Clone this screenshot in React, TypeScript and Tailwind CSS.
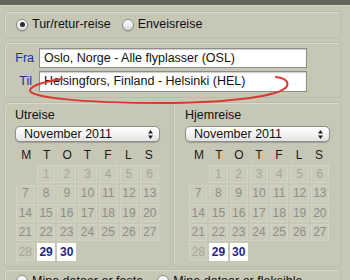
import React from "react";

const days: (number | null)[] = [
  null, 1, 2, 3, 4, 5, 6,
  7, 8, 9, 10, 11, 12, 13,
  14, 15, 16, 17, 18, 19, 20,
  21, 22, 23, 24, 25, 26, 27,
  28, 29, 30,
];

const Radio = ({ checked }: { checked: boolean }) => (
  <span className="flex h-[12px] w-[12px] items-center justify-center rounded-full border border-[#8d8d88] bg-gradient-to-b from-[#ffffff] to-[#dcdcdc] shadow-[0_1px_1px_rgba(0,0,0,0.15)]">
    {checked && <span className="h-[5px] w-[5px] rounded-full bg-[#2a2a2a]" />}
  </span>
);

const Select = ({ value }: { value: string }) => (
  <div className="flex h-[16px] items-center justify-between rounded-[5px] border border-[#8f8f8a] bg-gradient-to-b from-[#ffffff] via-[#f4f4f4] to-[#e2e2e2] pl-[8px] pr-[5px] text-[12.5px] text-[#111] shadow-[0_1px_1px_rgba(0,0,0,0.2)]">
    <span className="leading-none">{value}</span>
    <svg width="7" height="11" viewBox="0 0 7 11">
      <path d="M3.5 1 L6 4.5 L1 4.5 Z" fill="#222" />
      <path d="M3.5 10 L6 6.5 L1 6.5 Z" fill="#222" />
    </svg>
  </div>
);

const Calendar = ({ title, pad, grid }: { title: string; pad: string; grid: string }) => (
  <div className="flex h-[165px] flex-col rounded-[4px] border border-[#bcbcad] pt-[5px] shadow-[inset_1px_1px_0_#d9d9cc]">
    <div className={pad}>
      <div className="text-[12.5px] leading-[14px] text-[#111]">{title}</div>
      <div className="mt-[4px]">
        <Select value="November 2011" />
      </div>
    </div>
    <div className={grid}>
      <div className="mt-[6px] grid grid-cols-7 text-center text-[12px] leading-[14px] text-[#1a1a1a]">
        {["M", "T", "O", "T", "F", "L", "S"].map((d, i) => (
          <span key={i}>{d}</span>
        ))}
      </div>
      <div className="mt-[3px] grid grid-cols-7 gap-x-[2px] gap-y-[2px]">
        {days.map((d, i) =>
          d === null ? (
            <span key={i} />
          ) : d >= 29 ? (
            <span
              key={i}
              className="flex h-[17.5px] items-center justify-center bg-white text-[12px] font-semibold text-[#262680]"
            >
              {d}
            </span>
          ) : (
            <span
              key={i}
              className={`flex h-[17.5px] items-center justify-center border border-[#d3d3c5] bg-[#cbcbbc] text-[12px] ${
                d <= 6 || d === 28 ? "text-[#a6a69a]" : "text-[#8e8e86]"
              }`}
            >
              {d}
            </span>
          )
        )}
      </div>
    </div>
  </div>
);

export default function App() {
  return (
    <div className="relative h-[280px] w-[350px] overflow-hidden bg-[#c7c7b6] font-['Liberation_Sans',Arial,sans-serif]">
      <div className="h-[5px] bg-[#66665a]" />
      <div className="h-[1px] bg-[#d4d4c5]" />

      <div className="ml-[4px] w-[338px]">
        {/* trip type */}
        <div className="mt-[5px] flex h-[27px] items-center rounded-[4px] border border-[#bcbcad] pl-[11px] shadow-[inset_1px_1px_0_#d9d9cc]">
          <Radio checked />
          <span className="ml-[4px] text-[12.5px] text-[#111]">Tur/retur-reise</span>
          <span className="ml-[11px]">
            <Radio checked={false} />
          </span>
          <span className="ml-[4px] text-[12.5px] text-[#111]">Enveisreise</span>
        </div>

        {/* from / to */}
        <div className="mt-[4px] flex h-[56px] flex-col justify-center gap-[3px] rounded-[4px] border border-[#bcbcad] shadow-[inset_1px_1px_0_#d9d9cc]">
          <div className="flex items-center">
            <span className="w-[29px] text-right text-[12.5px] text-[#1f2ea6]">Fra</span>
            <div className="ml-[5px] flex h-[20px] w-[268px] items-center border border-[#8e8e86] bg-white pl-[4px] text-[12.5px] text-[#111] shadow-[inset_0_1px_1px_rgba(0,0,0,0.2)]">
              Oslo, Norge - Alle flyplasser (OSL)
            </div>
          </div>
          <div className="flex items-center">
            <span className="w-[27px] text-right text-[12.5px] text-[#1f2ea6]">Til</span>
            <div className="ml-[7px] flex h-[21px] w-[268px] items-center border border-[#8e8e86] bg-white pl-[4px] text-[12.5px] text-[#111] shadow-[inset_0_1px_1px_rgba(0,0,0,0.2)]">
              Helsingfors, Finland - Helsinki (HEL)
            </div>
          </div>
        </div>

        {/* calendars */}
        <div className="mt-[4px] flex gap-[2px]">
          <div className="w-[167px]">
            <Calendar title="Utreise" pad="px-[10px]" grid="ml-[11px] w-[143px]" />
          </div>
          <div className="w-[169px]">
            <Calendar title="Hjemreise" pad="px-[11px]" grid="ml-[15px] w-[140px]" />
          </div>
        </div>

        {/* flexibility */}
        <div className="mt-[2px] flex h-[30px] items-start rounded-[4px] border border-[#bcbcad] pl-[11px] pt-[5px] shadow-[inset_1px_1px_0_#d9d9cc]">
          <Radio checked={false} />
          <span className="ml-[4px] text-[12.5px] leading-[12px] text-[#111]">Mine datoer er faste</span>
          <span className="ml-[14px]">
            <Radio checked={false} />
          </span>
          <span className="ml-[4px] text-[12.5px] leading-[12px] text-[#111]">Mine datoer er fleksible</span>
        </div>
      </div>

      {/* red annotation */}
      <svg
        className="pointer-events-none absolute left-0 top-0"
        width="350"
        height="280"
        viewBox="0 0 350 280"
      >
        <path
          d="M62 79 C48 81 32 85 30 90 C28 97 80 103 160 103 C230 103 282 96 287 86 C289 81 284 78 276 77"
          fill="none"
          stroke="#d83a32"
          strokeWidth="2"
          strokeLinecap="round"
        />
      </svg>
    </div>
  );
}
